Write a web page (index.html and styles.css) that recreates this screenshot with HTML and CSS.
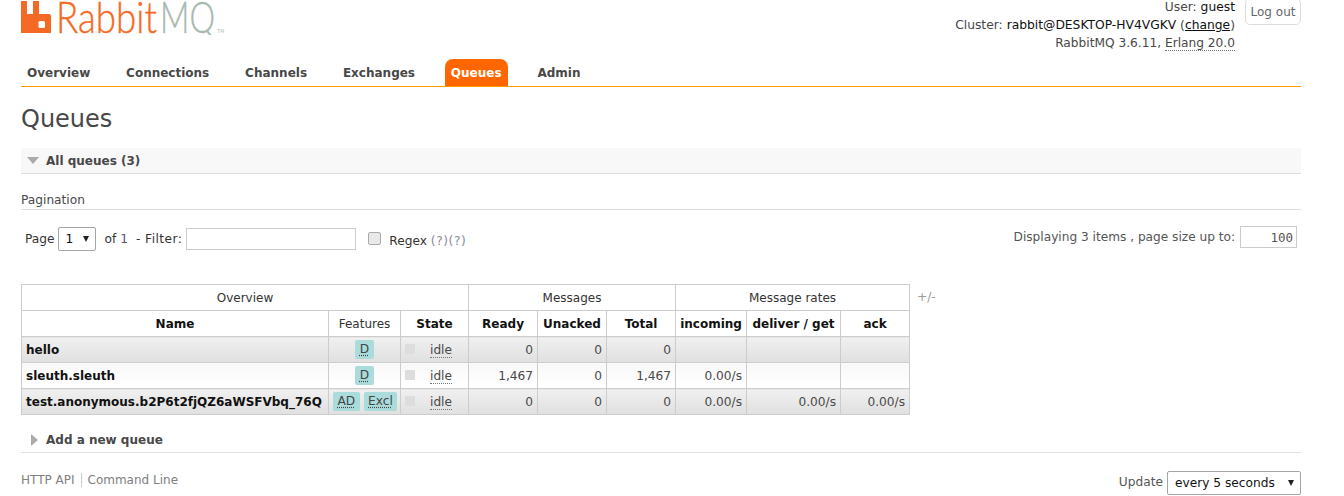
FILE: index.html
```html
<!DOCTYPE html>
<html lang="en">
<head>
<meta charset="utf-8">
<title>RabbitMQ Management</title>
<link rel="stylesheet" href="styles.css">
</head>
<body>
<div class="page">
  <header class="header">
    <a class="logo">
      <svg class="logo-svg" width="206" height="35" viewBox="0 0 206 35">
        <path fill="#f46a24" d="M0 1h6v13h6V1h6v13h10q2 0 2 2v17H0z"/>
        <rect x="17.5" y="21" width="6.5" height="7" rx="1.5" fill="#fff"/>
        <text class="logo-word" x="35" y="33" textLength="101" lengthAdjust="spacingAndGlyphs" fill="#f46a24" stroke="#f46a24">Rabbit</text>
        <text class="logo-word" x="139" y="33" textLength="55" lengthAdjust="spacingAndGlyphs" fill="#a9b8b2" stroke="#a9b8b2">MQ</text>
        <text class="logo-tm" x="196" y="33" fill="#b5bfba">TM</text>
      </svg>
    </a>
    <div class="login">
      <div class="login-lines">
        <div>User: <b>guest</b></div>
        <div>Cluster: <b>rabbit@DESKTOP-HV4VGKV</b> (<a class="change">change</a>)</div>
        <div class="version">RabbitMQ 3.6.11, <abbr class="dotted">Erlang 20.0</abbr></div>
      </div>
      <button class="logout">Log out</button>
    </div>
  </header>
  <nav class="nav">
    <a class="tab">Overview</a>
    <a class="tab">Connections</a>
    <a class="tab">Channels</a>
    <a class="tab">Exchanges</a>
    <a class="tab active">Queues</a>
    <a class="tab">Admin</a>
  </nav>
  <h1 class="title">Queues</h1>
  <div class="section-head"><span class="tri-down"></span>All queues (3)</div>
  <div class="pagination-title">Pagination</div>
  <div class="filter-row">
    <div class="filter-left">
      <span>Page</span>
      <span class="select-wrap page-wrap"><select class="select"><option>1</option></select></span>
      <span class="of">of <span class="one">1</span></span>
      <span class="flt">- Filter:</span>
      <input class="filter-input" type="text">
      <input class="regex-check" type="checkbox">
      <span class="regex">Regex <span class="help">(?)(?)</span></span>
    </div>
    <div class="filter-right">
      <span>Displaying 3 items , page size up to:</span>
      <input class="size-input" type="text" value="100">
    </div>
  </div>
  <div class="table-wrap">
    <table class="list">
      <colgroup>
        <col class="c-name"><col class="c-feat"><col class="c-state"><col class="c-num"><col class="c-num"><col class="c-num"><col class="c-inc"><col class="c-del"><col class="c-ack">
      </colgroup>
      <thead>
        <tr><th class="group" colspan="3">Overview</th><th class="group" colspan="3">Messages</th><th class="group" colspan="3">Message rates</th></tr>
        <tr><th>Name</th><th class="group">Features</th><th>State</th><th>Ready</th><th>Unacked</th><th>Total</th><th>incoming</th><th>deliver / get</th><th>ack</th></tr>
      </thead>
      <tbody>
        <tr class="alt1">
          <td class="name">hello</td>
          <td class="ctr"><abbr class="tag">D</abbr></td>
          <td class="state"><span class="dot"></span><abbr class="dotted">idle</abbr></td>
          <td class="r">0</td><td class="r">0</td><td class="r">0</td><td class="r"></td><td class="r"></td><td class="r"></td>
        </tr>
        <tr class="alt2">
          <td class="name">sleuth.sleuth</td>
          <td class="ctr"><abbr class="tag">D</abbr></td>
          <td class="state"><span class="dot"></span><abbr class="dotted">idle</abbr></td>
          <td class="r">1,467</td><td class="r">0</td><td class="r">1,467</td><td class="r">0.00/s</td><td class="r"></td><td class="r"></td>
        </tr>
        <tr class="alt1">
          <td class="name">test.anonymous.b2P6t2fjQZ6aWSFVbq_76Q</td>
          <td class="ctr"><abbr class="tag">AD</abbr> <abbr class="tag">Excl</abbr></td>
          <td class="state"><span class="dot"></span><abbr class="dotted">idle</abbr></td>
          <td class="r">0</td><td class="r">0</td><td class="r">0</td><td class="r">0.00/s</td><td class="r">0.00/s</td><td class="r">0.00/s</td>
        </tr>
      </tbody>
    </table>
    <span class="plusminus">+/-</span>
  </div>
  <div class="section-add"><span class="tri-right"></span>Add a new queue</div>
  <footer class="footer">
    <div class="footer-links"><a class="flink">HTTP API</a><a class="flink second">Command Line</a></div>
    <div class="update"><span>Update</span>
      <span class="select-wrap update-wrap"><select class="select"><option>every 5 seconds</option></select></span>
    </div>
  </footer>
</div>
</body>
</html>
```
FILE: styles.css
```css
* { box-sizing: border-box; }
html, body { margin: 0; padding: 0; background: #fff; }
body {
  font-family: "DejaVu Sans", Verdana, sans-serif;
  font-size: 12.2px;
  color: #484848;
  height: 496px;
  overflow: hidden;
}
.page { padding: 0 43px 0 21px; }
.header { display: flex; justify-content: space-between; height: 59px; }
.logo { display: block; height: 35px; }
.logo-svg { display: block; }
.logo-word { font-family: Lato, sans-serif; font-weight: 300; font-size: 44px; stroke-width: 0.4px; }
.logo-tm { font-family: "DejaVu Sans", sans-serif; font-size: 5px; }
.login { display: flex; align-items: flex-start; gap: 10px; margin-top: -2px; }
.login-lines { text-align: right; line-height: 18px; font-size: 12.3px; }
.login-lines .version { font-size: 12.2px; }
.login-lines b { font-weight: normal; color: #111; }
.change { color: #111; text-decoration: underline; }
.dotted { text-decoration: none; border-bottom: 1px dotted #777; }
.logout {
  width: 56px; height: 27px;
  font: 12px "DejaVu Sans", sans-serif;
  color: #666;
  background: #fff;
  border: 1px solid #ddd;
  border-radius: 5px;
  padding: 1px 0 0;
}
.nav { display: flex; height: 28px; border-bottom: 1px solid #f90; }
.tab {
  height: 27px;
  padding: 0 6px;
  margin-right: 23.85px;
  font-weight: bold;
  font-size: 12px;
  line-height: 29px;
  color: #484848;
  border-radius: 8px 8px 0 0;
}
.tab.active { background: #f60; color: #fff; }
.title { font-size: 24px; font-weight: normal; margin: 17px 0 0; height: 44px; line-height: 30px; color: #484848; }
.section-head {
  height: 26px; background: #f8f8f8; border-bottom: 1px solid #ddd;
  font-weight: bold; font-size: 12px; padding-left: 6px; display: flex; align-items: center;
}
.tri-down { width: 0; height: 0; border: 6px solid transparent; border-top: 7px solid #aaa; border-bottom: 0; margin-right: 7px; }
.tri-right { width: 0; height: 0; border: 6px solid transparent; border-left: 7px solid #aaa; border-right: 0; margin: 0 8px 0 10px; }
.pagination-title { margin-top: 17px; height: 19px; border-bottom: 1px solid #ddd; line-height: 18px; }
.filter-row { display: flex; justify-content: space-between; height: 74px; padding-top: 16px; }
.filter-left { display: flex; align-items: flex-start; padding-left: 4px; color: #333; }
.filter-left > span { line-height: 26px; }
.select-wrap { position: relative; display: block; }
.select-wrap::after {
  content: ""; position: absolute; right: 7px; top: 9px;
  border: 3.5px solid transparent; border-top: 6px solid #222; border-bottom: 0;
  pointer-events: none;
}
.select {
  appearance: none; display: block; width: 100%; height: 24px; margin: 0; padding: 0 0 0 7px;
  font: 12.2px "DejaVu Sans", sans-serif; background: #fff; color: #111;
  border: 1px solid #a6a6a6; border-radius: 2px;
}
.filter-left > .page-wrap { width: 38px; height: 24px; margin: 1px 0 0 3px; }
.update-wrap { width: 134px; height: 24px; }
.of { margin-left: 9px; }
.one { color: #557; }
.flt { margin-left: 8px; letter-spacing: 0.45px; }
.filter-input { width: 170px; height: 22px; margin: 2px 0 0 4px; border: 1px solid #ccc; padding: 0; }
.regex-check {
  appearance: none; width: 13px; height: 13px; margin: 6px 0 0 12px;
  background: #e9e9e9; border: 1px solid #aaa; border-radius: 2px;
}
.regex { margin: 2px 0 0 8px; }
.help { color: #889; letter-spacing: 0.6px; }
.filter-right { display: flex; align-items: flex-start; gap: 5px; padding-right: 4px; color: #555; font-size: 12.15px; }
.filter-right > span { line-height: 22px; }
.size-input {
  width: 57px; height: 22px; border: 1px solid #ccc; padding: 0 3px; margin: 0;
  text-align: right; font: 12.5px "DejaVu Sans Mono", monospace; color: #555;
}
.table-wrap { display: flex; align-items: flex-start; }
.list { border-collapse: collapse; table-layout: fixed; width: 888px; border: 1px solid #ccc; flex: none; }
.c-name { width: 307px; } .c-feat { width: 72px; } .c-state { width: 68px; }
.c-num { width: 69px; } .c-inc { width: 71px; } .c-del { width: 94px; } .c-ack { width: 69px; }
.list th, .list td { border: 1px solid #ccc; height: 26px; padding: 0 4px; white-space: nowrap; }
.list th { font-weight: bold; font-size: 12px; color: #111; background: #fff; }
.list th.group { font-weight: normal; font-size: 12px; color: #333; }
.alt1 td { background: linear-gradient(#f0f0f0, #e0e0e0); }
.alt2 td { background: linear-gradient(#f8f8f8, #fff); }
.list .name { font-weight: bold; font-size: 12px; color: #111; }
.ctr { text-align: center; }
.tag {
  display: inline-block; height: 19px; line-height: 19px; padding: 0 4.5px;
  background: #aadcdc; color: #444; border-radius: 2px;
  text-decoration: underline dotted; text-underline-offset: 2px;
}
.list .state { text-align: right; padding-right: 16px; }
.dot { float: left; width: 10px; height: 10px; background: #ddd; margin: 1px 0 0 0; }
.r { text-align: right; color: #484848; }
.plusminus { color: #999; margin: 6px 0 0 7px; }
.section-add {
  height: 26px; margin-top: 12px; border-bottom: 1px solid #ddd;
  font-weight: bold; font-size: 12px; display: flex; align-items: center;
}
.footer { display: flex; justify-content: space-between; margin-top: 18px; }
.footer-links { display: flex; align-items: center; height: 18px; color: #808080; font-size: 12px; }
.flink { padding-right: 6px; }
.flink.second { border-left: 1px solid #ccc; padding-left: 6px; }
.update { display: flex; gap: 4px; align-items: flex-start; }
.update > span:first-child { line-height: 22px; color: #555; }
```
